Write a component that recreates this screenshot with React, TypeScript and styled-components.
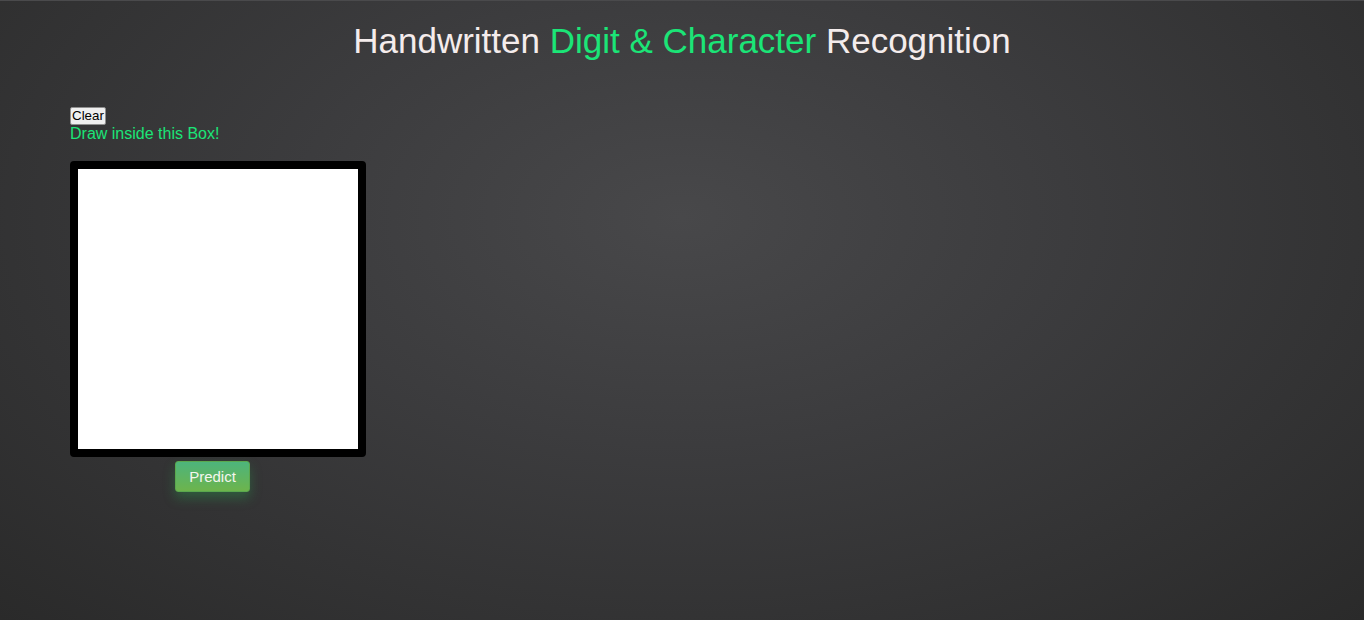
import React, { useRef } from 'react';
import styled, { createGlobalStyle } from 'styled-components';

const GlobalStyle = createGlobalStyle`
  html, body {
    margin: 0;
    padding: 0;
    height: 100%;
  }
  body {
    font-family: "Liberation Sans", Arial, sans-serif;
    background: radial-gradient(ellipse at 50% 35%, #48484a 0%, #3c3c3e 40%, #2a2a2a 100%);
    background-attachment: fixed;
    min-height: 620px;
  }
`;

const Page = styled.div`
  min-height: 620px;
  border-top: 1px solid #4a4a4c;
`;

const Title = styled.h1`
  margin: 0;
  padding-top: 19px;
  text-align: center;
  font-size: 35px;
  font-weight: 400;
  line-height: 42px;
  color: #f4ecec;
`;

const Accent = styled.span`
  color: #1be577;
`;

const Board = styled.section`
  display: flex;
  flex-direction: column;
  align-items: flex-start;
  margin: 45px 0 0 70px;
`;

const ClearButton = styled.button`
  font-family: "Liberation Sans", Arial, sans-serif;
  font-size: 13.33px;
  padding: 1px 1px;
  background: #efefef;
  border: 1px solid #8f8f8f;
  border-radius: 2px;
  color: #000;
  cursor: pointer;
  line-height: 14px;
`;

const Hint = styled.div`
  font-size: 16px;
  color: #1be577;
  line-height: 18px;
`;

const Canvas = styled.canvas`
  display: block;
  margin-top: 18px;
  width: 280px;
  height: 280px;
  background: #fff;
  border: 8px solid #000;
  border-radius: 4px;
  cursor: crosshair;
`;

const PredictButton = styled.button`
  margin: 4px 0 0 105px;
  width: 75px;
  height: 31px;
  font-family: "Liberation Sans", Arial, sans-serif;
  font-size: 15px;
  color: #f4f6ee;
  background: linear-gradient(to bottom, #4db47c, #6db44c);
  border: 1px solid #5aa84e;
  border-radius: 3px;
  box-shadow: 0 6px 12px rgba(40, 170, 80, 0.35);
  cursor: pointer;
`;

export default function App() {
  const canvasRef = useRef<HTMLCanvasElement>(null);

  const handleClear = () => {
    const ctx = canvasRef.current?.getContext('2d');
    if (ctx) ctx.clearRect(0, 0, 280, 280);
  };

  return (
    <Page>
      <GlobalStyle />
      <Title>
        Handwritten <Accent>Digit &amp; Character</Accent> Recognition
      </Title>
      <Board>
        <ClearButton onClick={handleClear}>Clear</ClearButton>
        <Hint>Draw inside this Box!</Hint>
        <Canvas ref={canvasRef} width={280} height={280} />
        <PredictButton>Predict</PredictButton>
      </Board>
    </Page>
  );
}
